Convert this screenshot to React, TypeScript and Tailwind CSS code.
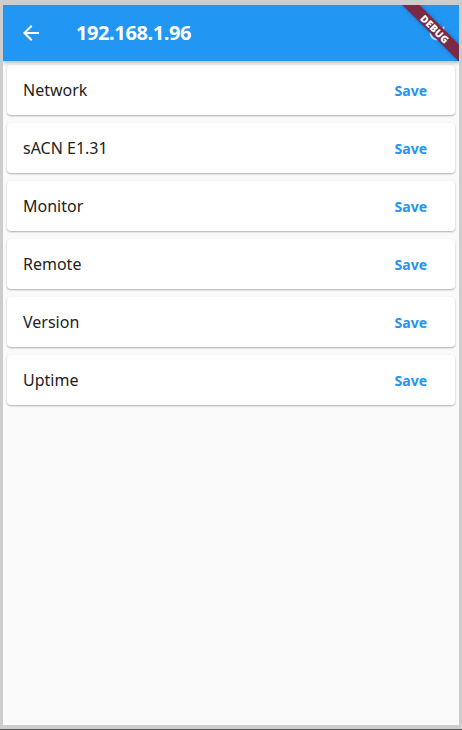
import React from 'react';

const SECTIONS = ['Network', 'sACN E1.31', 'Monitor', 'Remote', 'Version', 'Uptime'];

const App: React.FC = () => {
  return (
    <div className="w-[462px] h-[730px] bg-[#cdcdcd] flex flex-col" style={{ fontFamily: '"Noto Sans", Roboto, sans-serif' }}>
      <div className="mt-[5px] mx-[3px] h-[720px] bg-[#fafafa] flex flex-col relative overflow-hidden">
        {/* App bar */}
        <header className="h-[56px] bg-[#2196f3] flex items-center shadow-[0_2px_4px_rgba(0,0,0,0.25)] z-10 shrink-0">
          <button className="w-[56px] h-[56px] flex items-center justify-center text-white">
            <svg width="24" height="24" viewBox="0 0 24 24" fill="white">
              <path d="M20 11H7.83l5.59-5.59L12 4l-8 8 8 8 1.41-1.41L7.83 13H20v-2z" />
            </svg>
          </button>
          <h1 className="ml-[17px] text-white text-[20px] font-bold tracking-[-0.4px]">192.168.1.96</h1>
          <div className="ml-auto mr-[11px] text-white/80">
            <svg width="22" height="22" viewBox="0 0 24 24" fill="currentColor">
              <path d="M17.65 6.35A7.958 7.958 0 0012 4c-4.42 0-7.99 3.58-7.99 8s3.57 8 7.99 8c3.73 0 6.84-2.55 7.73-6h-2.08A5.99 5.99 0 0112 18c-3.31 0-6-2.69-6-6s2.69-6 6-6c1.66 0 3.14.69 4.22 1.78L13 11h7V4l-2.35 2.35z" />
            </svg>
          </div>
        </header>

        {/* Debug banner */}
        <div className="absolute top-[18px] right-[-16px] w-[80px] h-[12px] bg-[#7a2946] rotate-45 flex items-center justify-center z-20 pointer-events-none shadow-[0_0_4px_rgba(0,0,0,0.3)]">
          <span className="text-white text-[10px] leading-none font-black tracking-[0.2px]">DEBUG</span>
        </div>

        {/* List */}
        <main className="px-[4px] flex flex-col">
          {SECTIONS.map((name) => (
            <div
              key={name}
              className="my-[4px] h-[50px] bg-white rounded-[4px] shadow-[0_1px_2px_rgba(0,0,0,0.3)] flex items-center justify-between pl-[16px] pr-[28px]"
            >
              <span className="text-[16px] text-[#222]">{name}</span>
              <span className="text-[14px] font-bold text-[#2196f3]">Save</span>
            </div>
          ))}
        </main>
      </div>
      <div className="mt-auto h-[1px] bg-[#555]" />
    </div>
  );
};

export default App;
